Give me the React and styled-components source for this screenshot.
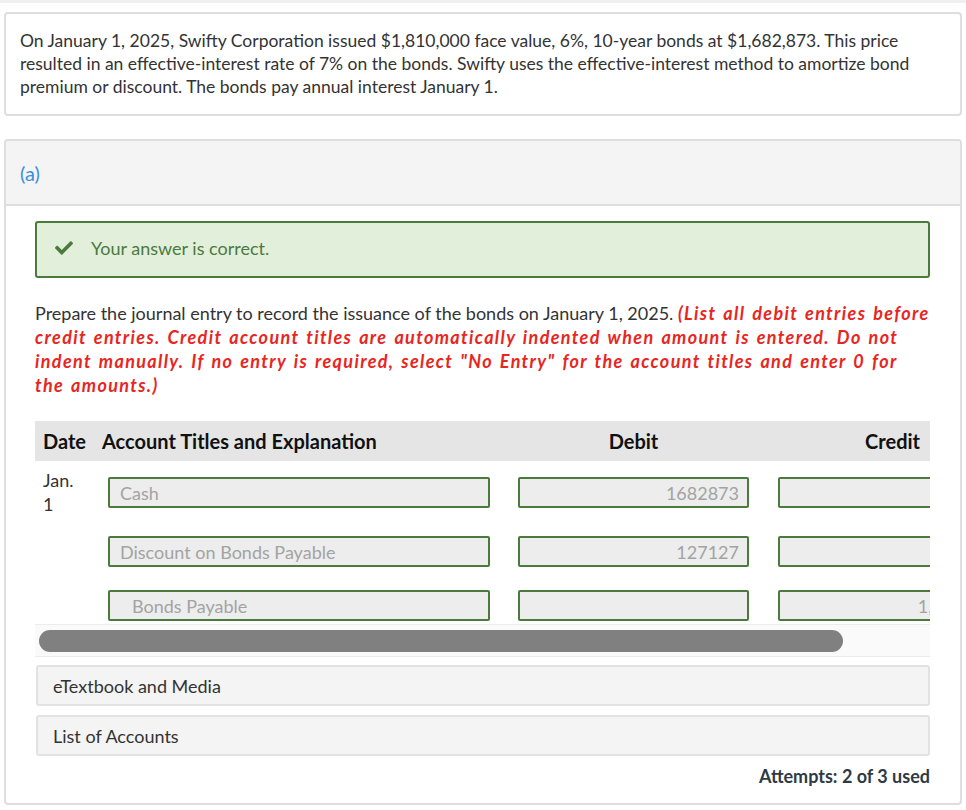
import React from "react"
import styled, { createGlobalStyle } from "styled-components"

const GlobalStyle = createGlobalStyle`
  html, body {
    margin: 0;
    padding: 0;
    background: #fff;
  }
  body {
    font-family: "Lato", "Open Sans", sans-serif;
    font-size: 18px;
    color: #333;
  }
`

const rows = [
  { id: 1, date: ["Jan.", "1"], account: "Cash", debit: "1682873", credit: "" },
  { id: 2, account: "Discount on Bonds Payable", debit: "127127", credit: "" },
  { id: 3, account: "Bonds Payable", debit: "", credit: "1,810,000", indent: true },
]

const CheckIcon = () => (
  <svg width="18" height="18" viewBox="0 0 512 512">
    <path
      fill="#4a7a3c"
      d="M173.9 439.4l-166.4-166.4c-10-10-10-26.2 0-36.2l36.2-36.2c10-10 26.2-10 36.2 0L192 312.7 432.1 72.6c10-10 26.2-10 36.2 0l36.2 36.2c10 10 10 26.2 0 36.2l-294.4 294.4c-10 10-26.2 10-36.2 0z"
    />
  </svg>
)

const App = () => {
  return (
    <Page>
      <GlobalStyle />
      <TopStrip />
      <Card>
        <Intro>
          On January 1, 2025, Swifty Corporation issued $1,810,000 face value, 6%,
          10-year bonds at $1,682,873. This price resulted in an effective-interest
          rate of 7% on the bonds. Swifty uses the effective-interest method to
          amortize bond premium or discount. The bonds pay annual interest January 1.
        </Intro>
      </Card>

      <Card>
        <PartHeader>(a)</PartHeader>
        <PartBody>
          <Notice>
            <CheckIcon />
            <span>Your answer is correct.</span>
          </Notice>

          <Prompt>
            Prepare the journal entry to record the issuance of the bonds on
            January 1, 2025.{" "}
            <Hint>
              (List all debit entries before credit entries. Credit account titles
              are automatically indented when amount is entered. Do not indent
              manually. If no entry is required, select "No Entry" for the account
              titles and enter 0 for the amounts.)
            </Hint>
          </Prompt>

          <TableWrap>
            <HeadRow>
              <HeadCell width="67px" pad="0 0 0 8px">Date</HeadCell>
              <HeadCell width="416px">Account Titles and Explanation</HeadCell>
              <HeadCell width="231px" align="center">Debit</HeadCell>
              <HeadCell grow align="right" pad="0 10px 0 0">Credit</HeadCell>
            </HeadRow>
            {rows.map(row => (
              <Row key={row.id}>
                <DateCell>
                  {row.date && row.date.map(part => <div key={part}>{part}</div>)}
                </DateCell>
                <Field indent={row.indent}>{row.account}</Field>
                <Spacer />
                <Field align="right">{row.debit}</Field>
                <Spacer />
                <Field align="right">{row.credit}</Field>
              </Row>
            ))}
          </TableWrap>
          <ScrollTrack>
            <ScrollThumb />
          </ScrollTrack>

          <Expander>eTextbook and Media</Expander>
          <Expander>List of Accounts</Expander>

          <Attempts>Attempts: 2 of 3 used</Attempts>
        </PartBody>
      </Card>
    </Page>
  )
}

export default App

const Page = styled.div`
  width: 966px;
  padding-bottom: 4px;
`

const TopStrip = styled.div`
  height: 3px;
  background: #efefef;
  margin-bottom: 9px;
`

const Card = styled.div`
  margin: 0 4px 23px;
  border: 2px solid #dedede;
  border-radius: 4px;
  background: #fff;
  overflow: hidden;
  &:last-child {
    margin-bottom: 0;
  }
`

const Intro = styled.p`
  margin: 0;
  padding: 15px 30px 16px 14px;
  line-height: 23px;
  font-size: 17.5px;
  color: #333;
`

const PartHeader = styled.div`
  height: 63px;
  display: flex;
  align-items: center;
  padding: 0 14px;
  background: #f4f4f4;
  border-bottom: 2px solid #dedede;
  color: #3b8ede;
  font-size: 20px;
`

const PartBody = styled.div`
  padding: 15px 30px 16px 29px;
`

const Notice = styled.div`
  display: flex;
  align-items: center;
  gap: 18px;
  box-sizing: border-box;
  height: 57px;
  padding: 0 0 3px 18px;
  border: 2px solid #4a7a3c;
  border-radius: 3px;
  background: #e2efda;
  color: #4b7a40;
  font-size: 18px;
`

const Prompt = styled.p`
  margin: 23px 0 24px;
  line-height: 24px;
  font-size: 18px;
  color: #333;
`

const Hint = styled.span`
  color: #e8261e;
  font-weight: 700;
  font-style: italic;
  letter-spacing: 1.35px;
  word-spacing: 1.6px;
`

const TableWrap = styled.div`
  width: 895px;
  overflow: hidden;
`

const HeadRow = styled.div`
  display: flex;
  align-items: center;
  height: 40px;
  background: #e5e5e5;
  font-weight: 700;
  font-size: 20px;
  color: #111;
`

const HeadCell = styled.div`
  flex: ${({ grow }) => (grow ? "1" : "none")};
  width: ${({ width }) => width || "auto"};
  text-align: ${({ align }) => align || "left"};
  padding: ${({ pad }) => pad || "0"};
  box-sizing: border-box;
  white-space: nowrap;
`

const Row = styled.div`
  display: grid;
  grid-template-columns: 73px 382px 28px 231px 29px 231px;
  align-items: start;
  width: 980px;
  padding: 7px 0;
  &:last-child {
    padding-bottom: 3px;
  }
`

const DateCell = styled.div`
  padding-left: 8px;
  margin-bottom: -3px;
  line-height: 24px;
  color: #333;
`

const Spacer = styled.div``

const Field = styled.div`
  box-sizing: border-box;
  height: 31px;
  margin-top: 9px;
  display: flex;
  align-items: center;
  justify-content: ${({ align }) => (align === "right" ? "flex-end" : "flex-start")};
  padding: ${({ indent }) => (indent ? "0 8px 0 22px" : "0 8px 0 10px")};
  border: 2px solid #4a7a3c;
  border-radius: 2px;
  background: #ededed;
  color: #a3a3a3;
  font-size: 18px;
  white-space: nowrap;
`

const ScrollTrack = styled.div`
  width: 895px;
  box-sizing: border-box;
  height: 33px;
  padding: 5px 87px 5px 4px;
  border-top: 1px solid #ececec;
  border-bottom: 1px solid #ececec;
  background: #fafafa;
`

const ScrollThumb = styled.div`
  height: 22px;
  border-radius: 11px;
  background: #808080;
`

const Expander = styled.div`
  box-sizing: border-box;
  height: 41px;
  margin: 8px 0 0 1px;
  display: flex;
  align-items: center;
  padding: 0 15px;
  border: 2px solid #e2e2e2;
  border-radius: 3px;
  background: #f4f4f4;
  color: #333;
  font-size: 18px;
  & + & {
    margin-top: 9px;
  }
`

const Attempts = styled.div`
  margin-top: 9px;
  text-align: right;
  font-weight: 700;
  font-size: 18px;
  color: #2e3a44;
  line-height: 22px;
`
